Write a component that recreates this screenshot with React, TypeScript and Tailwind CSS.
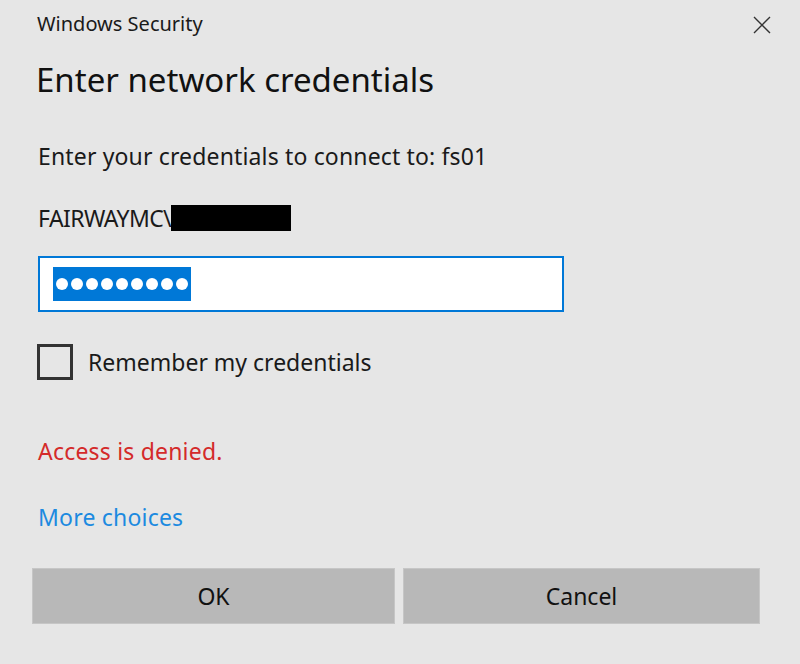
import { useState } from 'react';

export default function App() {
  const [remember, setRemember] = useState(false);

  return (
    <div className="w-[800px] h-[664px] bg-[#e6e6e6] text-[#1a1a1a] font-['Noto_Sans',sans-serif] overflow-hidden">
      <div className="flex items-start justify-between pl-[37px] pr-[26px] pt-[10px]">
        <div className="text-[20px] leading-[28px] text-[#1a1a1a]">Windows Security</div>
        <button className="mt-[3px] w-[24px] h-[24px] flex items-center justify-center" aria-label="Close">
          <svg width="18" height="18" viewBox="0 0 18 18">
            <path d="M1 1L17 17M17 1L1 17" stroke="#333" strokeWidth="1.4" />
          </svg>
        </button>
      </div>

      <div className="pl-[36px] mt-[22px] text-[33px] leading-[40px] text-[#111]">Enter network credentials</div>

      <div className="pl-[38px] mt-[41px] text-[23px] leading-[30px] tracking-[0.15px]">Enter your credentials to connect to: fs01</div>

      <div className="pl-[38px] mt-[32px] flex items-center text-[23px] leading-[30px]">
        <span className="tracking-[-0.6px]">FAIRWAYMC\</span>
        <span className="inline-block w-[120px] h-[26px] bg-black" />
      </div>

      <div className="pl-[38px] mt-[23px]">
        <div className="w-[526px] h-[56px] bg-white border-2 border-[#0078d7] flex items-center pl-[13px]">
          <span className="h-[34px] bg-[#0078d7] flex items-center gap-[3px] px-[3px]">
            {Array.from({ length: 9 }).map((_, i) => (
              <span key={i} className="w-[12px] h-[12px] rounded-full bg-white" />
            ))}
          </span>
        </div>
      </div>

      <label className="pl-[37px] mt-[32px] flex items-center gap-[15px] cursor-pointer">
        <button
          onClick={() => setRemember(!remember)}
          className="w-[36px] h-[36px] border-[3px] border-[#333] bg-transparent"
          aria-label="Remember my credentials"
        />
        <span className="text-[23px] leading-[30px]">Remember my credentials</span>
      </label>

      <div className="pl-[38px] mt-[56px] text-[23px] leading-[30px] tracking-[0.2px] text-[#d42a2a]">Access is denied.</div>

      <div className="pl-[38px] mt-[36px] text-[23px] leading-[30px] tracking-[0.2px] text-[#1c8ae0]">More choices</div>

      <div className="pl-[32px] mt-[36px] flex gap-[8px]">
        <button className="w-[363px] h-[56px] bg-[#b8b8b8] border border-[#c6c6c6] text-[23px] text-[#111]">OK</button>
        <button className="w-[357px] h-[56px] bg-[#b8b8b8] border border-[#c6c6c6] text-[23px] text-[#111]">Cancel</button>
      </div>
    </div>
  );
}
